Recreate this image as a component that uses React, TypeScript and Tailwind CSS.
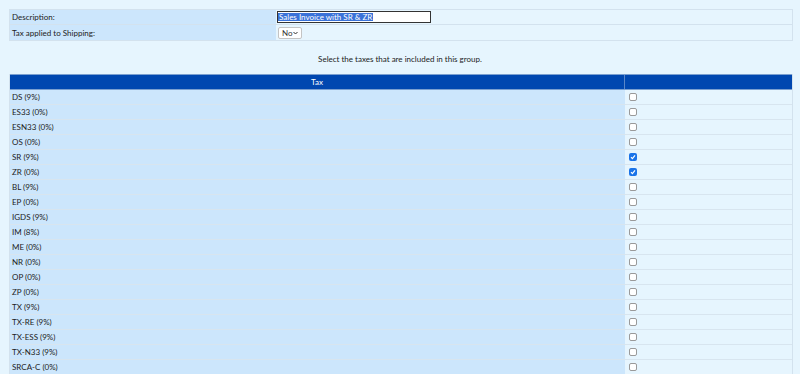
import React from 'react';

const taxes: { name: string; checked: boolean }[] = [
  { name: 'DS (9%)', checked: false },
  { name: 'ES33 (0%)', checked: false },
  { name: 'ESN33 (0%)', checked: false },
  { name: 'OS (0%)', checked: false },
  { name: 'SR (9%)', checked: true },
  { name: 'ZR (0%)', checked: true },
  { name: 'BL (9%)', checked: false },
  { name: 'EP (0%)', checked: false },
  { name: 'IGDS (9%)', checked: false },
  { name: 'IM (8%)', checked: false },
  { name: 'ME (0%)', checked: false },
  { name: 'NR (0%)', checked: false },
  { name: 'OP (0%)', checked: false },
  { name: 'ZP (0%)', checked: false },
  { name: 'TX (9%)', checked: false },
  { name: 'TX-RE (9%)', checked: false },
  { name: 'TX-ESS (9%)', checked: false },
  { name: 'TX-N33 (9%)', checked: false },
  { name: 'SRCA-C (0%)', checked: false },
];

const Check = ({ checked }: { checked: boolean }) =>
  checked ? (
    <span className="flex h-[8px] w-[8px] items-center justify-center rounded-[2px] bg-[#1a73e8]">
      <svg width="6" height="6" viewBox="0 0 6 6">
        <path d="M1 3.2 L2.4 4.6 L5 1.4" stroke="white" strokeWidth="1.2" fill="none" />
      </svg>
    </span>
  ) : (
    <span className="block h-[8px] w-[8px] rounded-[2px] border border-[#9a9a9a] bg-white" />
  );

const App: React.FC = () => {
  return (
    <div
      className="min-h-screen bg-[#e6f5fe] px-[9px] pt-[9px] text-[8px] leading-none text-[#222]"
      style={{ fontFamily: 'Lato, "Noto Sans", sans-serif' }}
    >
      {/* Top form */}
      <div className="w-[784px] border border-[#d3e2ee]">
        <div className="flex h-[15px] border-b border-[#d3e2ee]">
          <div className="flex w-[266px] items-center bg-[#cce6fc] pl-[2px]">Description:</div>
          <div className="flex flex-1 items-center pl-[1px]">
            <div className="flex h-[12px] w-[154px] items-center border border-[#333] bg-white">
              <span className="bg-[#3a72d8] px-[1px] text-white">Sales Invoice with SR &amp; ZR</span>
            </div>
          </div>
        </div>
        <div className="flex h-[15px]">
          <div className="flex w-[266px] items-center bg-[#cce6fc] pl-[2px]">Tax applied to Shipping:</div>
          <div className="flex flex-1 items-center pl-[2px]">
            <div className="flex h-[12px] w-[24px] items-center justify-between rounded-[2px] border border-[#c4c4c4] bg-white px-[3px] text-[#333]">
              <span>No</span>
              <svg width="5" height="4" viewBox="0 0 5 4">
                <path d="M0.5 1 L2.5 3 L4.5 1" stroke="#333" strokeWidth="1" fill="none" />
              </svg>
            </div>
          </div>
        </div>
      </div>

      <div className="flex h-[33px] items-center justify-center pt-[2px]">
        Select the taxes that are included in this group.
      </div>

      {/* Tax table */}
      <div className="w-[784px] border-x border-[#d3e2ee]">
        <div className="flex h-[16px] border-y border-[#7a9fd0] bg-[#0047b0] text-white">
          <div className="flex w-[615px] items-center justify-center border-r border-[#5a86c8]">Tax</div>
          <div className="flex-1" />
        </div>
        {taxes.map((t) => (
          <div key={t.name} className="flex h-[15px] border-b border-[#d8e5ef]">
            <div className="flex w-[615px] items-center bg-[#cce6fc] pl-[2px]">{t.name}</div>
            <div className="flex flex-1 items-center pl-[4px]">
              <Check checked={t.checked} />
            </div>
          </div>
        ))}
      </div>
    </div>
  );
};

export default App;
